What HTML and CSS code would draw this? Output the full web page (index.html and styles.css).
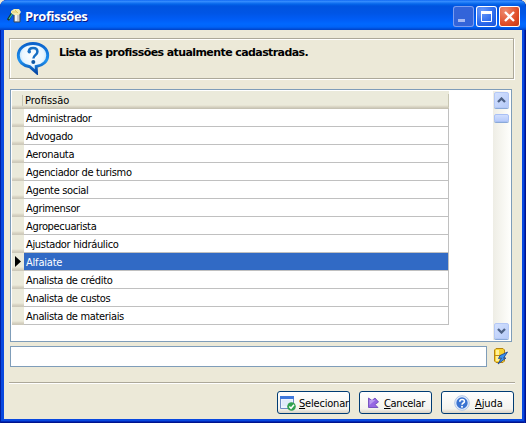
FILE: index.html
```html
<!DOCTYPE html>
<html lang="pt-BR">
<head>
<meta charset="utf-8">
<title>Profissões</title>
<link rel="stylesheet" href="styles.css">
</head>
<body>
<div class="window">
  <header class="titlebar">
    <svg class="app-icon" width="16" height="16" viewBox="0 0 16 16"><path d="M1 12L6 4" stroke="#16352e" stroke-width="2.4"/><path d="M2 11L6 5" stroke="#35c4ae" stroke-width="1.2"/><path d="M7 6h6v8H7z" fill="#c9ccd0" stroke="#3d4655"/><path d="M8 7h2v6H8z" fill="#f4f4f4"/><path d="M4 3l3-2h5l2 3-2 3H7L4 5z" fill="#f3ecb0"/><path d="M5 4h5M8 2l3 3" stroke="#dcc967"/></svg>
    <h1 class="caption">Profissões</h1>
    <div class="controls">
      <span class="control disabled"><svg width="21" height="21"><path d="M5 13h7v3H5z" fill="#a5b9f2"/></svg></span>
      <span class="control"><svg width="21" height="21"><path d="M5 5h11v3H5z" fill="#fff"/><path d="M5.500 5.500h10v10h-10z" fill="none" stroke="#fff"/></svg></span>
      <span class="control close"><svg width="21" height="21"><path d="M6 6l9 9M15 6l-9 9" stroke="#fff" stroke-width="2.3"/></svg></span>
    </div>
  </header>
  <main class="client">
    <section class="banner">
      <svg class="bubble" width="34" height="34" viewBox="0 0 34 34">
        <defs><linearGradient id="ring" x1="0" y1="0" x2="0" y2="1"><stop offset="0" stop-color="#0b62cb"/><stop offset=".6" stop-color="#1f92f0"/><stop offset="1" stop-color="#0648a6"/></linearGradient>
        <radialGradient id="fill" cx=".5" cy=".4" r=".6"><stop offset="0" stop-color="#fff"/><stop offset=".6" stop-color="#eaf6ff"/><stop offset="1" stop-color="#8fcdf9"/></radialGradient></defs>
        <path d="M17 2.500C8.500 2.500 2.300 7.700 2.300 14.500c0 6 5 10.500 11.700 11.300l6.500 5.700-.3-6C27 24.500 31.700 20 31.700 14.500 31.700 7.700 25.500 2.500 17 2.500z" fill="url(#fill)" stroke="url(#ring)" stroke-width="2.900"/>
        <path d="M12.800 11c0-2.700 1.800-4 4.300-4 2.700 0 4.300 1.500 4.300 3.700 0 3.300-4 3.600-4 6.800" fill="none" stroke="#176fc4" stroke-width="2.500"/><circle cx="13.300" cy="10.700" r="1.700" fill="#176fc4"/><circle cx="17.300" cy="21" r="2" fill="#0d58a6"/>
      </svg>
      <p class="message">Lista as profissões atualmente cadastradas.</p>
    </section>
    <section class="grid">
      <div class="table">
        <div class="head"><span class="corner"></span><span class="column">Profissão</span></div>
        <div class="row"><span class="mark"></span><span class="cell">Administrador</span></div>
        <div class="row"><span class="mark"></span><span class="cell">Advogado</span></div>
        <div class="row"><span class="mark"></span><span class="cell">Aeronauta</span></div>
        <div class="row"><span class="mark"></span><span class="cell">Agenciador de turismo</span></div>
        <div class="row"><span class="mark"></span><span class="cell">Agente social</span></div>
        <div class="row"><span class="mark"></span><span class="cell">Agrimensor</span></div>
        <div class="row"><span class="mark"></span><span class="cell">Agropecuarista</span></div>
        <div class="row"><span class="mark"></span><span class="cell">Ajustador hidráulico</span></div>
        <div class="row selected"><span class="mark"><svg width="6" height="11"><path d="M0 0L6 5.500L0 11z"/></svg></span><span class="cell">Alfaiate</span></div>
        <div class="row"><span class="mark"></span><span class="cell">Analista de crédito</span></div>
        <div class="row"><span class="mark"></span><span class="cell">Analista de custos</span></div>
        <div class="row"><span class="mark"></span><span class="cell">Analista de materiais</span></div>
      </div>
      <div class="scrollbar">
        <span class="arrow"><svg width="9" height="6"><path d="M1 5l3.500-3.500L8 5" fill="none" stroke="#4d6185" stroke-width="2.300"/></svg></span>
        <span class="thumb"></span>
        <span class="arrow down"><svg width="9" height="6"><path d="M1 1l3.500 3.500L8 1" fill="none" stroke="#4d6185" stroke-width="2.300"/></svg></span>
      </div>
    </section>
    <div class="search">
      <input class="field" type="text" aria-label="Profissão">
      <svg width="14" height="17" viewBox="0 0 14 17"><path d="M2 .5h7L10.500 2v11L9 14.500H2L.5 13V2z" fill="#f8d331" stroke="#b78412"/><path d="M2 2h3v11H2z" fill="#fff19b"/><path d="M1 7.500h9" stroke="#c28b14"/><path d="M13.500 4L6 7.500l-1.500 3 3-.5L4 16l8-6-2.500.200L13.500 4z" fill="#3b91ee" stroke="#153f91" stroke-width=".8"/></svg>
    </div>
    <footer class="footer">
      <button class="button"><svg width="16" height="16" viewBox="0 0 16 16"><path d="M.5 1.500h13v12H.5z" fill="#edf4ff" stroke="#6f8dc5"/><path d="M0 1h14v3H0z" fill="#3f78dc"/><path d="M2 6h10M2 8h10M2 10h10" stroke="#d4e2f6"/><circle cx="11.500" cy="11.500" r="4.300" fill="#31a150"/><path d="M9.300 11.500l1.700 1.800 3-3.600" fill="none" stroke="#fff" stroke-width="1.500"/></svg><span class="label select"><u>S</u>elecionar</span></button>
      <button class="button cancel"><svg width="16" height="16" viewBox="0 0 16 16"><path d="M3.500 3v9.500H13l-3-3 3.500-2.500L10 3 7 5.500z" fill="#9667e3" stroke="#6540b6" stroke-width=".8"/><path d="M4.500 5v5l6-5z" fill="#b99af0"/></svg><span class="label"><u>C</u>ancelar</span></button>
      <button class="button help"><svg width="16" height="16" viewBox="0 0 16 16"><circle cx="8" cy="8" r="7.300" fill="#e4edfb" stroke="#b0c5e7"/><circle cx="8" cy="8" r="5.700" fill="#3b73d1"/><path d="M5.800 6.700c0-3 4.600-2.800 4.600-.3C10.400 8 8 8 8 9.700" fill="none" stroke="#fff" stroke-width="1.600"/><circle cx="8" cy="11.700" r="1" fill="#fff"/></svg><span class="label"><u>A</u>juda</span></button>
    </footer>
  </main>
</div>
</body>
</html>
```

FILE: styles.css
```css
* { box-sizing: border-box; }
body {
  margin: 0;
  background: #ece9d8;
  font: 11px/13px "DejaVu Sans Condensed", "DejaVu Sans", sans-serif;
  font-stretch: condensed;
  color: #000;
  overflow: hidden;
}
svg { display: block; flex: none; }
.window {
  width: 526px;
  height: 423px;
  padding: 0 4px 4px;
  border-radius: 7px 7px 0 0;
  background: #0848df;
  box-shadow: inset 1px 0 #001ea0, inset -1px 0 #00138c, inset -2px 0 #0029b8, inset 0 -1px #00138c, inset 0 -2px #0029b8;
}
.titlebar {
  display: flex;
  align-items: center;
  height: 30px;
  margin: 0 -4px;
  padding: 2px 6px 0 7px;
  border-radius: 7px 7px 0 0;
  background: linear-gradient(#0058ee 0, #3b91ff 1px, #2a83fa 2px, #0566ea 4px, #0053df 6px, #0055e5 13px, #005cf5 19px, #0068ff 24px, #0063f7 27px, #0041c5 30px);
}
.caption {
  margin: 0 0 0 2px;
  font: bold 13px/18px "Open Sans", sans-serif;
  font-stretch: normal;
  letter-spacing: -.4px;
  color: #fff;
  text-shadow: 1px 1px #0a1883;
}
.controls { display: flex; gap: 2px; margin-left: auto; }
.control {
  width: 21px;
  height: 21px;
  border-radius: 3px;
  background: radial-gradient(circle at 30% 25%, #6b9bfb, #2766ea 60%, #1850d3);
  box-shadow: inset 0 0 0 1px #fff;
}
.disabled { background: #3364d9; box-shadow: inset 0 0 0 1px #7b9df0; }
.close { background: radial-gradient(circle at 30% 25%, #ee8b6f, #df4b25 60%, #bf3511); }
.client {
  height: 389px;
  padding: 8px 7px 0 5px;
  background: #ece9d8;
}
.banner {
  display: flex;
  width: 505px;
  height: 41px;
  padding: 2px 0 0 6px;
  border: 1px solid #aca899;
  box-shadow: inset 1px 1px #fff, 1px 1px #fff;
}
.message {
  margin: 4px 0 0 9px;
  font: bold 11px/15px "DejaVu Sans", sans-serif;
  font-stretch: normal;
  letter-spacing: -.59px;
  white-space: nowrap;
}
.grid {
  display: flex;
  justify-content: space-between;
  width: 502px;
  height: 253px;
  margin: 10px 0 0 1px;
  padding: 1px;
  border: 1px solid #7f9db9;
  background: #fff;
}
.table { width: 437px; }
.head {
  display: flex;
  align-items: center;
  height: 18px;
  background: linear-gradient(#ebeadb 0 14px, #e2decd 15px, #d6d2c2 16px, #cbc7b8 17px, #c1bdae 18px);
}
.corner { width: 11px; height: 11px; border-right: 1px solid #c7c5b2; }
.column { flex: 1; height: 13px; padding-left: 2px; border-right: 1px solid #c7c5b2; }
.row { display: flex; height: 18px; }
.mark {
  width: 12px;
  padding: 3px 0 0 3px;
  background: linear-gradient(#ebeadb 0 14px, #e2decd 15px, #d6d2c2 16px, #cbc7b8 18px);
}
.cell {
  flex: 1;
  padding: 3px 0 0 2px;
  border-right: 1px solid #c0c0c0;
  border-bottom: 1px solid #c0c0c0;
  letter-spacing: -.33px;
}
.selected .cell { background: #316ac5; color: #fff; letter-spacing: -.2px; }
.scrollbar {
  display: flex;
  flex-direction: column;
  align-items: center;
  width: 17px;
  background: linear-gradient(90deg, #eeede5, #fefefb);
}
.arrow {
  display: grid;
  place-items: center;
  width: 15px;
  height: 16px;
  margin-top: 1px;
  border: 1px solid #b4c8f6;
  border-radius: 2px;
  background: linear-gradient(135deg, #d2e0fe, #b7cbf8);
  box-shadow: 0 1px #8aa9d8;
}
.thumb {
  width: 15px;
  height: 8px;
  margin-top: 6px;
  border: 1px solid #a9c0f5;
  border-radius: 2px;
  background: linear-gradient(#d0defe, #b7cbfa);
  box-shadow: 0 1px #8aa9d8;
}
.down { margin: auto 0 1px; }
.search { display: flex; align-items: center; gap: 7px; margin: 4px 0 0 1px; }
.field {
  width: 477px;
  height: 21px;
  padding: 1px 3px;
  border: 1px solid #7f9db9;
  background: #fff;
  font: inherit;
}
.footer {
  display: flex;
  gap: 9px;
  justify-content: flex-end;
  width: 506px;
  margin-top: 15px;
  padding: 8px 1px 0 0;
  border-top: 1px solid #aca899;
  box-shadow: inset 0 1px #fff;
}
.button {
  display: flex;
  align-items: center;
  width: 73px;
  height: 23px;
  padding: 0 0 0 2px;
  border: 1px solid #003c74;
  border-radius: 3px;
  background: linear-gradient(#fff, #f4f3ee 80%, #d9d2c5);
  font: inherit;
  color: #000;
}
.label { margin: 2px 0 0 3px; letter-spacing: -.35px; white-space: nowrap; }
.select { letter-spacing: -.2px; }
.cancel { padding-left: 5px; }
.help { padding-left: 12px; }
.help .label { margin-left: 5px; letter-spacing: -.1px; }
```
